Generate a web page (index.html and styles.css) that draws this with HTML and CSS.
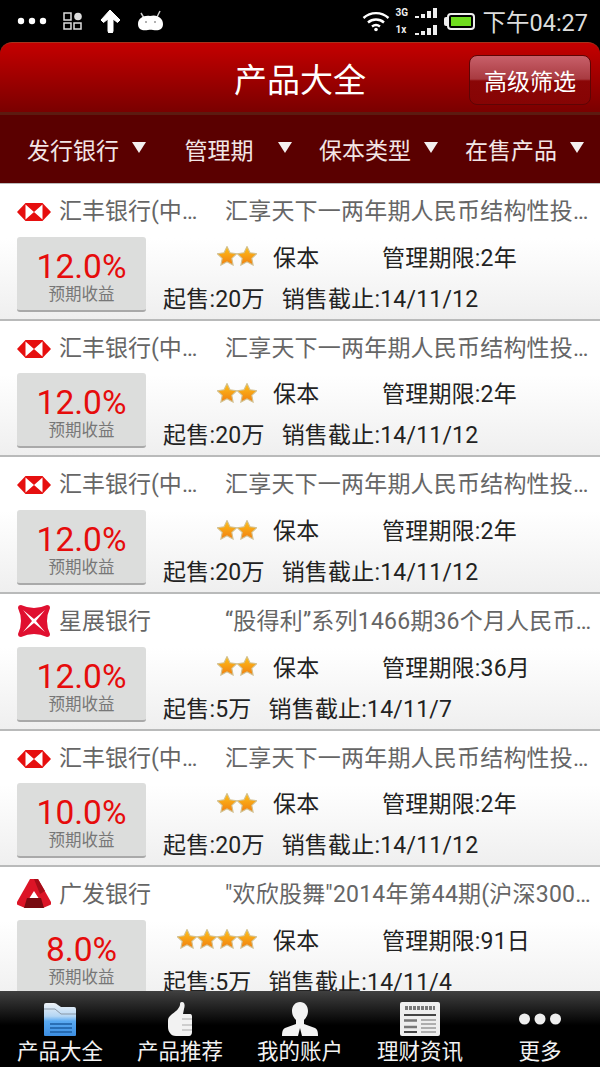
FILE: index.html
```html
<!DOCTYPE html>
<html lang="zh-CN">
<head>
  <meta charset="UTF-8" />
  <meta name="viewport" content="width=device-width, initial-scale=1.0"/>
  <title>产品大全</title>
  <link rel="stylesheet" href="styles.css">
</head>
<body>
  <!-- shared icons -->
  <svg class="defs" width="0" height="0">
    <defs>
      <linearGradient id="starFill" x1="0" y1="0" x2="0" y2="1">
        <stop offset="0" stop-color="#ffc21a"/>
        <stop offset="1" stop-color="#f07f10"/>
      </linearGradient>
      <linearGradient id="folderFill" x1="0" y1="0" x2="0" y2="1">
        <stop offset="0" stop-color="#eef2f6"/>
        <stop offset=".4" stop-color="#b4d6f4"/>
        <stop offset=".55" stop-color="#5aaaf2"/>
        <stop offset="1" stop-color="#3c8ee2"/>
      </linearGradient>
      <symbol id="star" viewBox="1 1 18 18">
        <path d="M10 1.500l2.700 5.600 6.100.8-4.500 4.200 1.200 6.100L10 15.200l-5.500 3 1.200-6.100L1.200 7.900l6.100-.8z" fill="url(#starFill)" stroke="#d2c08f" stroke-width="1"/>
      </symbol>
      <symbol id="hsbc" viewBox="0 0 34 18">
        <path d="M0 9L8.500 0h17L34 9l-8.500 9h-17z" fill="#e60f0f"/>
        <path d="M8.500 1.500L17 9 8.500 16.500zM25.500 1.500L17 9l8.500 7.500z" fill="#fff"/>
      </symbol>
      <symbol id="dbs" viewBox="0 0 34 34">
        <path d="M4 1Q17 7 30 1Q33 1 33 4Q27 17 33 30Q33 33 30 33Q17 27 4 33Q1 33 1 30Q7 17 1 4Q1 1 4 1z" fill="#e01030"/>
        <path d="M6 6l11 9 11-9-9 11 9 11-11-9-11 9 9-11z" fill="#fff"/>
      </symbol>
      <symbol id="gdb" viewBox="0 0 34 30">
        <path d="M13 0h8l13 23q1 2-1 3l-7 3H8l-7-3q-2-1-1-3z" fill="#dc1426"/>
        <path d="M17 0h4l7 12-5 3z" fill="#a50d18"/>
        <path d="M10 19h14l3 10H7z" fill="#780a10"/>
        <path d="M17 12l4.500 7h-9z" fill="#fff"/>
      </symbol>
    </defs>
  </svg>

  <div class="status-bar">
    <div class="status-left">
      <svg width="30" height="8" viewBox="0 0 30 8"><circle cx="4" cy="4" r="3.200" fill="#fff"/><circle cx="15" cy="4" r="3.200" fill="#fff"/><circle cx="26" cy="4" r="3.200" fill="#fff"/></svg>
      <svg width="20" height="18" viewBox="0 0 20 18" fill="none" stroke="#ddd" stroke-width="1.500"><rect x="1" y="1" width="7" height="7"/><rect x="1" y="11" width="7" height="6"/><rect x="11" y="11" width="7" height="6"/><circle cx="15" cy="4.500" r="3.800" fill="#ddd" stroke="none"/></svg>
      <svg width="22" height="24" viewBox="0 0 22 24"><path d="M11 1l10 10-2.500 2.500L14 10v12a2 2 0 0 1-5 0V10l-4.500 3.500L2 11z" fill="#fff" stroke="#fff" stroke-linejoin="round"/></svg>
      <svg width="27" height="22" viewBox="0 0 27 22"><path d="M4 3l3 5M23 1l-3 6" stroke="#ccc" stroke-width="1.500"/><path d="M13 6c7-2 13 2 13 8s-5 7-10 6c-2-.5-3-.5-5 0-5 1-10 0-10-6s6-9 12-8z" fill="#fff"/><circle cx="9" cy="12" r="1" fill="#999"/><circle cx="18" cy="12" r="1" fill="#999"/></svg>
    </div>
    <div class="status-right">
      <svg width="28" height="22" viewBox="0 0 28 22" fill="none" stroke="#fff" stroke-width="2.400"><path d="M1.500 8c7-6.500 18-6.500 25 0M6 12.500c4.500-4 11.500-4 16 0M10 16.500c2.500-2 5.500-2 8 0"/><circle cx="14" cy="19.500" r="1.800" fill="#fff" stroke="none"/></svg>
      <div class="signal">
        <div class="signal-row"><span class="net">3G</span><i class="b1"></i><i class="b2"></i><i class="b3"></i><i class="b4"></i></div>
        <div class="signal-row"><span class="net">1x</span><i class="b1"></i><i class="b2"></i><i class="b3"></i><i class="b4"></i></div>
      </div>
      <div class="battery-nub"></div>
      <div class="battery"><span class="battery-level"></span></div>
      <span class="clock">下午04:27</span>
    </div>
  </div>

  <header class="app-header">
    <h1>产品大全</h1>
    <button class="filter-btn">高级筛选</button>
  </header>

  <nav class="filter-bar">
    <div class="filter-cell"><span>发行银行</span><i class="arrow"></i></div>
    <div class="filter-cell"><span>管理期</span><i class="arrow"></i></div>
    <div class="filter-cell"><span>保本类型</span><i class="arrow"></i></div>
    <div class="filter-cell"><span>在售产品</span><i class="arrow"></i></div>
  </nav>

  <main class="list">
    <article class="item">
      <div class="item-head">
        <svg class="logo"><use href="#hsbc" width="34" height="18" y="11"/></svg>
        <span class="bank">汇丰银行(中国)有限公司</span>
        <span class="name">汇享天下一两年期人民币结构性投资产品</span>
      </div>
      <div class="item-body">
        <div class="yield"><b>12.0%</b><small>预期收益</small></div>
        <div class="info">
          <div class="info-line">
            <span class="stars"><svg><use href="#star"/></svg><svg><use href="#star"/></svg></span>
            <span class="kind">保本</span>
            <span>管理期限:2年</span>
          </div>
          <div class="info-line sale"><span>起售:20万</span><span>销售截止:14/11/12</span></div>
        </div>
      </div>
    </article>

    <article class="item">
      <div class="item-head">
        <svg class="logo"><use href="#hsbc" width="34" height="18" y="11"/></svg>
        <span class="bank">汇丰银行(中国)有限公司</span>
        <span class="name">汇享天下一两年期人民币结构性投资产品</span>
      </div>
      <div class="item-body">
        <div class="yield"><b>12.0%</b><small>预期收益</small></div>
        <div class="info">
          <div class="info-line">
            <span class="stars"><svg><use href="#star"/></svg><svg><use href="#star"/></svg></span>
            <span class="kind">保本</span>
            <span>管理期限:2年</span>
          </div>
          <div class="info-line sale"><span>起售:20万</span><span>销售截止:14/11/12</span></div>
        </div>
      </div>
    </article>

    <article class="item">
      <div class="item-head">
        <svg class="logo"><use href="#hsbc" width="34" height="18" y="11"/></svg>
        <span class="bank">汇丰银行(中国)有限公司</span>
        <span class="name">汇享天下一两年期人民币结构性投资产品</span>
      </div>
      <div class="item-body">
        <div class="yield"><b>12.0%</b><small>预期收益</small></div>
        <div class="info">
          <div class="info-line">
            <span class="stars"><svg><use href="#star"/></svg><svg><use href="#star"/></svg></span>
            <span class="kind">保本</span>
            <span>管理期限:2年</span>
          </div>
          <div class="info-line sale"><span>起售:20万</span><span>销售截止:14/11/12</span></div>
        </div>
      </div>
    </article>

    <article class="item">
      <div class="item-head">
        <svg class="logo"><use href="#dbs" width="34" height="34" y="2"/></svg>
        <span class="bank">星展银行</span>
        <span class="name">“股得利”系列1466期36个月人民币结构性产品</span>
      </div>
      <div class="item-body">
        <div class="yield"><b>12.0%</b><small>预期收益</small></div>
        <div class="info">
          <div class="info-line">
            <span class="stars"><svg><use href="#star"/></svg><svg><use href="#star"/></svg></span>
            <span class="kind">保本</span>
            <span>管理期限:36月</span>
          </div>
          <div class="info-line sale"><span>起售:5万</span><span>销售截止:14/11/7</span></div>
        </div>
      </div>
    </article>

    <article class="item">
      <div class="item-head">
        <svg class="logo"><use href="#hsbc" width="34" height="18" y="11"/></svg>
        <span class="bank">汇丰银行(中国)有限公司</span>
        <span class="name">汇享天下一两年期人民币结构性投资产品</span>
      </div>
      <div class="item-body">
        <div class="yield"><b>10.0%</b><small>预期收益</small></div>
        <div class="info">
          <div class="info-line">
            <span class="stars"><svg><use href="#star"/></svg><svg><use href="#star"/></svg></span>
            <span class="kind">保本</span>
            <span>管理期限:2年</span>
          </div>
          <div class="info-line sale"><span>起售:20万</span><span>销售截止:14/11/12</span></div>
        </div>
      </div>
    </article>

    <article class="item">
      <div class="item-head">
        <svg class="logo"><use href="#gdb" width="34" height="30" y="4"/></svg>
        <span class="bank">广发银行</span>
        <span class="name">"欢欣股舞"2014年第44期(沪深300指数挂钩产品</span>
      </div>
      <div class="item-body">
        <div class="yield"><b>8.0%</b><small>预期收益</small></div>
        <div class="info">
          <div class="info-line">
            <span class="stars"><svg><use href="#star"/></svg><svg><use href="#star"/></svg><svg><use href="#star"/></svg><svg><use href="#star"/></svg></span>
            <span class="kind">保本</span>
            <span>管理期限:91日</span>
          </div>
          <div class="info-line sale"><span>起售:5万</span><span>销售截止:14/11/4</span></div>
        </div>
      </div>
    </article>
  </main>

  <footer class="tab-bar">
    <div class="tab">
      <svg width="32" height="34" viewBox="0 0 32 34"><path d="M0 3q0-2 2-2h8q2 0 4 2l3 2h13q2 0 2 2v26q0 1-1 1H1q-1 0-1-1z" fill="url(#folderFill)"/><path d="M0 7h11l6 5h15" fill="none" stroke="#8a98a6" stroke-width="1"/><path d="M6 22h22M6 26h22M6 30h22" stroke="#1d5da3" stroke-width="1.500"/></svg>
      <span>产品大全</span>
    </div>
    <div class="tab">
      <svg width="24" height="34" viewBox="0 0 24 34" fill="#f2f2f2"><path d="M14 0c3 0 3 4 2 7l-1 5h7c2 0 2 2 2 3v15c0 2-1 4-3 4H8c-3 0-5-1-6-3-1-1-2-3-2-6v-6c0-3 1-4 3-6 4-3 8-6 9-10 0-2 0-3 2-3z"/><path d="M14 17h10M14 23h10M14 28h10" stroke="#aaa" stroke-width="1"/></svg>
      <span>产品推荐</span>
    </div>
    <div class="tab">
      <svg width="38" height="34" viewBox="0 0 38 34" fill="#f2f2f2"><path d="M19 0c5 0 8 4 8 9 0 4-2 7-4 9v4l11 4c2 1 3 3 3 8H21l-2-8-2 8H1c0-5 1-7 3-8l11-4v-4c-2-2-4-5-4-9 0-5 3-9 8-9z"/></svg>
      <span>我的账户</span>
    </div>
    <div class="tab">
      <svg width="40" height="34" viewBox="0 0 40 34"><rect width="40" height="34" rx="2" fill="#eee"/><path d="M5 6h30" stroke="#777" stroke-width="4" stroke-dasharray="3 1"/><path d="M4 13h32" stroke="#444" stroke-width="2"/><path d="M4 18.500h13M4 25h13" stroke="#777" stroke-width="2.500"/><path d="M4 30h13" stroke="#444" stroke-width="2"/><path d="M21 18h15M21 22h15M21 26h15M21 30h15" stroke="#999" stroke-width="1.500"/></svg>
      <span>理财资讯</span>
    </div>
    <div class="tab">
      <svg width="42" height="34" viewBox="0 0 42 34" fill="#eee"><circle cx="5.500" cy="17" r="5.500"/><circle cx="21" cy="17" r="5.500"/><circle cx="36.500" cy="17" r="5.500"/></svg>
      <span>更多</span>
    </div>
  </footer>
</body>
</html>
```

FILE: styles.css
```css
* { box-sizing: border-box; }
html, body { margin: 0; height: 100%; }
body {
  width: 600px;
  height: 1067px;
  overflow: hidden;
  display: flex;
  flex-direction: column;
  font-family: Roboto, "Noto Sans CJK SC", sans-serif;
  background: #000;
}
.defs { display: block; height: 0; }

/* status bar */
.status-bar { flex: 0 0 42px; display: flex; justify-content: space-between; align-items: center; padding: 0 12px 0 17px; background: #000; color: #eee; }
.status-left { display: flex; align-items: center; gap: 16px; }
.status-right { display: flex; align-items: center; }
.signal { width: 42px; margin: 0 0 6px 5px; }
.signal-row { display: flex; align-items: flex-end; justify-content: flex-end; gap: 2px; height: 17px; }
.signal-row i { width: 4px; background: #eee; }
.net { margin-right: auto; font-size: 10px; font-weight: 700; line-height: 10px; }
.b1 { height: 2px; }
.b2 { height: 4px; }
.b3 { height: 7px; }
.b4 { height: 10px; }
.battery-nub { width: 3px; height: 9px; margin-left: 7px; border-radius: 2px 0 0 2px; background: #eee; }
.battery { width: 28px; height: 17px; border: 2px solid #eee; border-radius: 4px; padding: 2px; }
.battery-level { display: block; height: 100%; background: #6fdc1e; }
.clock { font-size: 23.500px; margin-left: 7px; color: #ddd; }

/* header */
.app-header {
  flex: 0 0 73px;
  display: grid;
  grid-template-columns: 1fr auto 1fr;
  align-items: center;
  padding: 0 9px;
  border-top: 1px solid #a8321c;
  border-bottom: 3px solid #5c1a10;
  border-radius: 12px 12px 0 0;
  background: linear-gradient(#c40000, #7a0000);
}
.app-header h1 { grid-column: 2; margin: 0; font-size: 33px; font-weight: 400; color: #fff; }
.filter-btn {
  grid-column: 3;
  justify-self: end;
  width: 122px;
  height: 50px;
  margin-top: 4px;
  padding: 0;
  border: 1px solid #5e0505;
  border-radius: 8px;
  background: linear-gradient(#c8606a, #a83a40 48%, #8a0606 52%, #860404);
  color: #fff;
  font-family: inherit;
  font-size: 23px;
}

.filter-bar { flex: 0 0 68px; display: grid; grid-template-columns: repeat(4, 146px); background: #5a0000; color: #f2e6e6; font-size: 23px; }
.filter-cell { display: grid; grid-template-columns: 1fr auto 1fr; align-items: center; }
.filter-cell span { grid-column: 2; }
.arrow { grid-column: 3; justify-self: end; width: 0; height: 0; border-left: 7px solid transparent; border-right: 7px solid transparent; border-top: 11px solid #f4f0f0; margin-top: -4px; }

/* list */
.list { flex: 1; min-height: 0; overflow: hidden; background: #fff; border-top: 1px solid #bbb; }
.item { height: 136.670px; padding: 8px 0 0 17px; border-bottom: 2px solid #b9baba; background: linear-gradient(#fff, #fff 40%, #efefef); }
.item-head { display: flex; align-items: center; height: 34px; margin-bottom: 10.700px; color: #666; font-size: 23px; }
.logo { flex: 0 0 34px; width: 34px; height: 34px; overflow: visible; }
.bank { flex: 0 0 auto; width: 141px; margin-left: 8px; padding-right: 2px; white-space: nowrap; overflow: hidden; text-overflow: ellipsis; }
.name { width: 370px; margin-left: 25px; letter-spacing: .2px; white-space: nowrap; overflow: hidden; text-overflow: ellipsis; }
.item-body { display: flex; }
.yield {
  flex: 0 0 129px;
  height: 75px;
  display: flex;
  flex-direction: column;
  align-items: center;
  padding-top: 11px;
  border-bottom: 2px solid #a9a9a9;
  border-radius: 3px;
  background: #dcdddc;
}
.yield b { font-size: 33.500px; font-weight: 400; line-height: 38px; color: #e60c0c; }
.yield small { font-size: 16.500px; line-height: 18px; color: #777; }
.info { margin-left: 17px; padding-top: 2px; color: #222; font-size: 23px; letter-spacing: .2px; }
.info-line { display: flex; align-items: center; height: 34px; }
.sale { gap: 17px; margin-top: 7px; }
.stars { display: flex; justify-content: flex-end; width: 94px; padding-top: 1px; }
.stars svg { width: 20px; height: 20px; }
.kind { width: 109px; margin-left: 16px; }

/* bottom tabs */
.tab-bar { flex: 0 0 75px; display: grid; grid-template-columns: repeat(5, 1fr); background: linear-gradient(#404040, #000 45%); color: #f2f2f2; font-size: 21.500px; }
.tab { display: flex; flex-direction: column; align-items: center; padding-top: 11px; line-height: 31px; }
```
